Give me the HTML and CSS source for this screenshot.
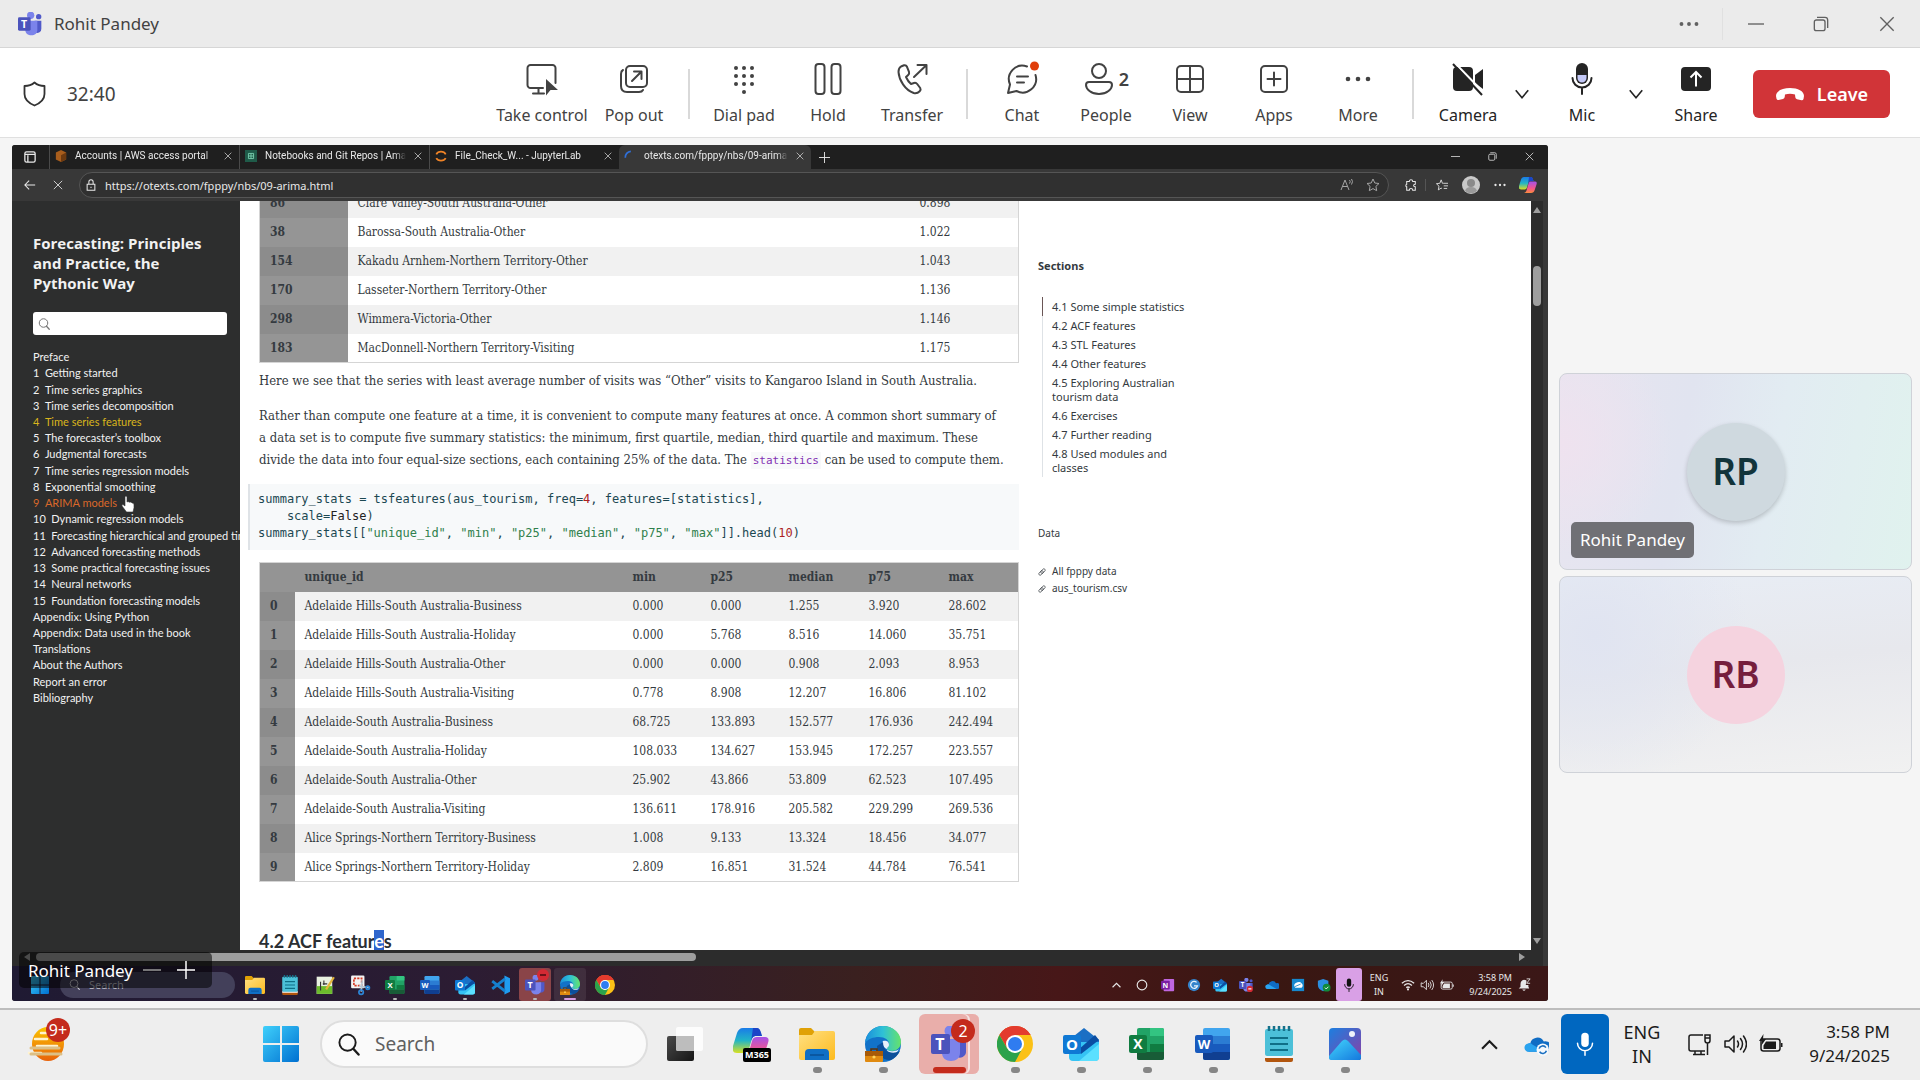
FILE: index.html
```html
<!DOCTYPE html>
<html lang="en">
<head>
<meta charset="utf-8">
<title>Rohit Pandey</title>
<link rel="stylesheet" href="styles.css">
</head>
<body>
<svg class="sprite" aria-hidden="true">
  <defs>
    <linearGradient id="g-win" x1="0" y1="0" x2="1" y2="1"><stop offset="0" stop-color="#3fd0fb"/><stop offset="1" stop-color="#0070d1"/></linearGradient>
    <linearGradient id="g-folder" x1="0" y1="0" x2="1" y2="1"><stop offset="0" stop-color="#ffe083"/><stop offset="1" stop-color="#fdbb1e"/></linearGradient>
    <linearGradient id="g-edge" x1="0" y1="0" x2="1" y2="0"><stop offset="0" stop-color="#1a8fdc"/><stop offset=".5" stop-color="#2fc1d6"/><stop offset="1" stop-color="#66e36a"/></linearGradient>
    <linearGradient id="g-sun" x1="0" y1="0" x2="0" y2="1"><stop offset="0" stop-color="#fbc400"/><stop offset="1" stop-color="#e8620a"/></linearGradient>
    <linearGradient id="g-cop1" x1="0" y1="0" x2="0" y2="1"><stop offset="0" stop-color="#1a7be8"/><stop offset=".5" stop-color="#22b5c6"/><stop offset="1" stop-color="#d9e021"/></linearGradient>
    <linearGradient id="g-cop2" x1="0" y1="0" x2="0" y2="1"><stop offset="0" stop-color="#a552e8"/><stop offset=".6" stop-color="#f4568a"/><stop offset="1" stop-color="#fb8b3c"/></linearGradient>
    <linearGradient id="g-photo" x1="0" y1="0" x2="1" y2="1"><stop offset="0" stop-color="#1c7fe0"/><stop offset="1" stop-color="#8a3fa5"/></linearGradient>
    <linearGradient id="g-hill" x1="0" y1="0" x2="1" y2="1"><stop offset="0" stop-color="#43d6fd"/><stop offset="1" stop-color="#1478dd"/></linearGradient>
    <linearGradient id="g-dark" x1="0" y1="0" x2="1" y2="1"><stop offset="0" stop-color="#4a4a4a"/><stop offset="1" stop-color="#151515"/></linearGradient>
  </defs>
  <symbol id="i-win" viewBox="0 0 36 36"><path fill="url(#g-win)" d="M2 0h15v17H0V2a2 2 0 0 1 2-2zM19 0h15a2 2 0 0 1 2 2v15H19zM0 19h17v17H2a2 2 0 0 1-2-2zM19 19h17v15a2 2 0 0 1-2 2H19z"/></symbol>
  <symbol id="i-folder" viewBox="0 0 36 36"><path fill="#e0a106" d="M0 4a2 2 0 0 1 2-2h10l4 4-3 6H0z"/><path fill="url(#g-folder)" d="M0 9h13l3-4h18a2 2 0 0 1 2 2v25a2 2 0 0 1-2 2H2a2 2 0 0 1-2-2z"/><path fill="#0f6fc5" d="M6 34V27a4 4 0 0 1 4-4h16a4 4 0 0 1 4 4v7z"/><path stroke="#0a4f94" stroke-width="1.5" d="M11 29h14"/></symbol>
  <symbol id="i-edge" viewBox="0 0 36 36"><circle cx="18" cy="18" r="18" fill="#1272c8"/><path fill="url(#g-edge)" d="M0 17C1 7 8 0 18 0s18 7 18 16c0 6-5 9-9 9-3 0-5-1-5-2 0-2 2-2 2-5 0-4-4-7-10-7C8 11 3 13 0 17z"/><path fill="#fff" d="M22 23c-3-1-6-5-4-8 5-1 6 2 6 4 0 2-2 2-2 4 0 1 3 3 7 2 2 0 4-1 5-2-2 4-5 6-8 5-2 0-4-2-4-5z" opacity=".9"/><path fill="#0c4f9a" d="M12 20c0 8 6 15 14 14 4-2 7-5 9-9-8 4-17 1-17-9z"/><path fill="#e08a10" d="M0 25h18v10a1 1 0 0 1-1 1H1a1 1 0 0 1-1-1z"/><path fill="#a85a07" d="M0 25h18v5H0z"/><path d="M6 25v-2h6v2" fill="none" stroke="#5b3008" stroke-width="1.5"/><circle cx="9" cy="31" r="1.6" fill="#ffd35a"/></symbol>
  <symbol id="i-teams" viewBox="0 0 36 36"><circle cx="19" cy="5" r="5.5" fill="#7b83eb"/><circle cx="31" cy="7" r="4" fill="#5059c9"/><path fill="#5059c9" d="M25 13h10v12a6 6 0 0 1-10 5z"/><path fill="#7b83eb" d="M11 13h18v14c0 5-4 8-9 8s-9-3-9-8z"/><rect y="8" width="19" height="20" rx="2" fill="#4b53bc"/><text x="9" y="24" class="glyph" font-size="16">T</text></symbol>
  <symbol id="i-chrome" viewBox="0 0 36 36"><circle cx="18" cy="18" r="18" fill="#fbc116"/><path fill="#e33b2e" d="M18 18 2.4 9A18 18 0 0 1 33.6 9H18z"/><path fill="#e33b2e" d="M2.4 9 10 22l8-13h15.600A18 18 0 0 0 2.400 9z"/><path fill="#2ba24c" d="M2.4 9 10.200 22.500 18 27l-0.500 0 7.500-4-7 13A18 18 0 0 1 2.400 9z"/><circle cx="18" cy="18" r="9" fill="#fff"/><circle cx="18" cy="18" r="7" fill="#2f7cf0"/></symbol>
  <symbol id="i-outlook" viewBox="0 0 36 36"><path fill="#1b6fc4" d="M6 14 21 2l15 12v8H6z"/><path fill="#35c3f4" d="M6 16h30v15a4 4 0 0 1-4 4H10a4 4 0 0 1-4-4z"/><path fill="#0a4ea3" d="M15 24 32 9l4 5-18 14z"/><path fill="#5be0ff" d="M16 35 36 18v13a4 4 0 0 1-4 4z"/><rect y="9" width="18" height="19" rx="2" fill="#0f78d4"/><text x="9" y="24" class="glyph" font-size="15">O</text></symbol>
  <symbol id="i-excel" viewBox="0 0 36 36"><rect x="8" y="2" width="27" height="32" rx="2" fill="#21a366"/><path fill="#33c481" d="M21 2h12a2 2 0 0 1 2 2v6H21z"/><path fill="#107c41" d="M21 18h14v8H21z"/><path fill="#185c37" d="M8 26h27v6a2 2 0 0 1-2 2H10a2 2 0 0 1-2-2z"/><rect y="9" width="18" height="18" rx="2" fill="#107c41"/><text x="9" y="23" class="glyph" font-size="14">X</text></symbol>
  <symbol id="i-word" viewBox="0 0 36 36"><rect x="8" y="2" width="27" height="32" rx="2" fill="#41a5ee"/><path fill="#2b7cd3" d="M8 10h27v8H8z"/><path fill="#185abd" d="M8 18h27v8H8z"/><path fill="#103f91" d="M8 26h27v6a2 2 0 0 1-2 2H10a2 2 0 0 1-2-2z"/><rect y="9" width="18" height="18" rx="2" fill="#185abd"/><text x="9" y="23" class="glyph" font-size="13">W</text></symbol>
  <symbol id="i-notepad" viewBox="0 0 36 36"><rect x="4" y="30" width="28" height="6" rx="2" fill="#b2560e"/><path fill="#f5f5f5" d="M4 29h28v3H4z"/><rect x="4" y="3" width="28" height="27" rx="2" fill="#4cc0d8"/><path d="M8 0v5M13 0v5M18 0v5M23 0v5M28 0v5" stroke="#16718a" stroke-width="2.500"/><path d="M9 12h18M9 18h18M9 24h18" stroke="#0f6f87" stroke-width="2"/></symbol>
  <symbol id="i-photos" viewBox="0 0 36 36"><rect x="2" y="2" width="32" height="32" rx="4" fill="url(#g-photo)"/><path fill="#104fa8" d="m16 34 10-12 8 8v2a2 2 0 0 1-2 2z"/><path fill="url(#g-hill)" d="M2 30 15 15q3-3 6 0l13 14v3a2 2 0 0 1-2 2H4a2 2 0 0 1-2-2z"/><circle cx="25" cy="8" r="3" fill="#eef2fa"/></symbol>
  <symbol id="i-taskview" viewBox="0 0 36 36"><rect x="0" y="10" width="27" height="25" rx="2" fill="url(#g-dark)"/><rect x="9" y="1" width="27" height="24" rx="2" fill="#fff" opacity=".8"/><path fill="#bdbdbd" d="M9 10h18v15H11a2 2 0 0 1-2-2z"/></symbol>
  <symbol id="i-copilot" viewBox="0 0 36 36"><path fill="url(#g-cop1)" d="M10 2h14c3 0 3 4 5 8h-6c-3 0-4 2-5 6l-2 7c-1 3-3 4-6 4H4c-4 0-5-3-4-7l4-13c1-3 3-5 6-5z"/><path fill="#1c45c8" d="M20 2h4c3 0 4 4 5 8h-6c-3 0-4 2-5 6z"/><path fill="url(#g-cop2)" d="M32 11h-8c-3 0-4 1-5 4l-4 14c-1 3-3 5-5 5h14c4 0 6-2 7-5l4-12c1-3 1-6-3-6z"/></symbol>
  <symbol id="i-search" viewBox="0 0 24 24"><circle cx="11" cy="10" r="8.500" fill="none" stroke="currentColor" stroke-width="2"/><path d="m17 16.500 5.500 6" stroke="currentColor" stroke-width="2.500" stroke-linecap="round"/></symbol>
  <symbol id="i-mic" viewBox="0 0 24 32"><rect x="7" y="1" width="10" height="19" rx="5" fill="currentColor"/><path d="M2 15a10 10 0 0 0 20 0M12 25v6" fill="none" stroke="currentColor" stroke-width="2" stroke-linecap="round"/></symbol>
  <symbol id="i-volume" viewBox="0 0 24 24"><path d="M2 9v6h4l5 5V4L6 9zM14.500 9q2 3 0 6M17.500 6.500q4 5.500 0 11M20.500 4q6 8 0 16" fill="none" stroke="currentColor" stroke-width="1.500" stroke-linejoin="round" stroke-linecap="round"/></symbol>
  <symbol id="i-battery" viewBox="0 0 24 24"><rect x="2" y="7" width="19" height="12" rx="2.500" fill="none" stroke="currentColor" stroke-width="1.500"/><path fill="currentColor" d="M7 9.500h10v7.500H4.500v-3.500zM22 11h1.500v4H22zM4.500 2 0 9h3l-1 5 5-7H4z"/></symbol>
  <symbol id="i-close" viewBox="0 0 12 12"><path d="m1 1 10 10M11 1 1 11" stroke="currentColor" fill="none"/></symbol>
  <symbol id="i-restore" viewBox="0 0 12 12"><path d="M1 4.500A1.500 1.500 0 0 1 2.500 3h5A1.500 1.500 0 0 1 9 4.500v5A1.500 1.500 0 0 1 7.500 11h-5A1.500 1.500 0 0 1 1 9.500zM3 1h6a2 2 0 0 1 2 2v6" stroke="currentColor" fill="none"/></symbol>
  <symbol id="i-dash" viewBox="0 0 12 12"><path d="M0 6h12" stroke="currentColor"/></symbol>
  <symbol id="i-plus" viewBox="0 0 12 12"><path d="M0 6h12M6 0v12" stroke="currentColor"/></symbol>
  <symbol id="i-dots" viewBox="0 0 24 24"><circle cx="3" cy="12" r="2.300" fill="currentColor"/><circle cx="12" cy="12" r="2.300" fill="currentColor"/><circle cx="21" cy="12" r="2.300" fill="currentColor"/></symbol>
  <symbol id="i-down" viewBox="0 0 16 16"><path d="m3 5 5 6 5-6" fill="none" stroke="currentColor" stroke-width="1.300"/></symbol>
  <symbol id="i-up" viewBox="0 0 16 16"><path d="m1 12 7-7 7 7" fill="none" stroke="currentColor" stroke-width="2"/></symbol>
  <symbol id="i-cloud" viewBox="0 0 24 24"><path fill="#0f6cc4" d="M6 11a7 7 0 0 1 13-2 5 5 0 0 1 3 10H5a4 4 0 0 1 1-8z"/><path fill="#2aa3ef" d="m8 12 12 7H5a4 4 0 0 1-1-8q2-1 4 1z"/></symbol>
  <symbol id="i-link" viewBox="0 0 12 12"><g fill="none" stroke="currentColor" transform="rotate(-45 6 6)"><rect x="0" y="4" width="8" height="4" rx="2"/><rect x="4" y="4" width="8" height="4" rx="2"/></g></symbol>
</svg>

<header class="titlebar">
  <svg class="app-logo"><use href="#i-teams"/></svg>
  <h1 class="title">Rohit Pandey</h1>
  <div class="window-controls">
    <button aria-label="More"><svg class="more"><use href="#i-dots"/></svg></button>
    <button class="ruled" aria-label="Minimize"><svg><use href="#i-dash"/></svg></button>
    <button aria-label="Restore"><svg><use href="#i-restore"/></svg></button>
    <button aria-label="Close"><svg><use href="#i-close"/></svg></button>
  </div>
</header>

<div class="toolbar">
  <svg class="shield" viewBox="0 0 24 26"><path d="M12 1.500q4 3.500 10 3.500v8c0 5-4 9-10 11.500C6 22 2 18 2 13V5q6 0 10-3.500z" fill="none" stroke="currentColor" stroke-width="1.800" stroke-linejoin="round"/></svg>
  <time class="timer">32:40</time>
  <div class="actions">
    <button class="action wide"><svg viewBox="0 0 32 32"><path class="ln" d="M17 25H4.500a3 3 0 0 1-3-3V5a3 3 0 0 1 3-3h22a3 3 0 0 1 3 3v15M12.500 25v5M7 30.500h11"/><path class="fl" d="M20 16v16.500l4.500-5.500H32z"/></svg>Take control</button>
    <button class="action"><svg viewBox="0 0 32 32"><rect class="ln" x="8" y="3" width="21" height="21" rx="4"/><path class="ln" d="M5 7q-2 1-2 4v12q0 6 6 6h12q3 0 4-2M14 18l9-9M16 8.500h7.500V16"/></svg>Pop out</button>
    <span class="rule"></span>
    <button class="action"><svg viewBox="0 0 32 32"><g class="fl"><circle cx="8" cy="5" r="2"/><circle cx="16" cy="5" r="2"/><circle cx="24" cy="5" r="2"/><circle cx="8" cy="13" r="2"/><circle cx="16" cy="13" r="2"/><circle cx="24" cy="13" r="2"/><circle cx="8" cy="21" r="2"/><circle cx="16" cy="21" r="2"/><circle cx="24" cy="21" r="2"/><circle cx="16" cy="29" r="2"/></g></svg>Dial pad</button>
    <button class="action"><svg viewBox="0 0 32 32"><rect class="ln" x="3.500" y="1" width="9" height="30" rx="3"/><rect class="ln" x="19.500" y="1" width="9" height="30" rx="3"/></svg>Hold</button>
    <button class="action"><svg viewBox="0 0 32 32"><path class="ln" d="m5 3.500 3-1.200q2-.6 3 1.500l2 5q.6 2-.8 3.200L10 14q2 4.500 5 7l3-1q2-.6 3.200 1l3 4q1 1.800-.5 3.300-2.500 2.500-6 1.700C9 27 3 17 2.500 9q0-4 2.500-5.500zM18 14 30 2.500M21.500 2H30.500v9"/></svg>Transfer</button>
    <span class="rule"></span>
    <button class="action"><svg viewBox="0 0 32 32"><path class="ln" d="M21 3.500A13.500 13.500 0 0 0 4 21.500L2 30l8.500-2A13.500 13.500 0 0 0 29.500 12M11 13.500h11M11 19.500h7"/><circle cx="28.500" cy="3" r="4.500" fill="#e03e0a"/></svg>Chat</button>
    <button class="action"><span class="with-count"><svg viewBox="0 0 32 32"><circle class="ln" cx="16" cy="8" r="7"/><path class="ln" d="M6 19h20q3 0 3 3c0 4-5 9-13 9S3 26 3 22q0-3 3-3z"/></svg><b>2</b></span>People</button>
    <button class="action"><svg viewBox="0 0 32 32"><rect class="ln" x="3" y="3" width="26" height="26" rx="4"/><path class="ln" d="M16 3v26M3 16h26"/></svg>View</button>
    <button class="action"><svg viewBox="0 0 32 32"><rect class="ln" x="3" y="3" width="26" height="26" rx="4"/><path class="ln" d="M16 9.500v13M9.500 16h13"/></svg>Apps</button>
    <button class="action"><svg viewBox="0 0 32 32"><g class="fl"><circle cx="6" cy="16" r="2.300"/><circle cx="16" cy="16" r="2.300"/><circle cx="26" cy="16" r="2.300"/></g></svg>More</button>
    <span class="rule"></span>
    <button class="action strong"><svg viewBox="0 0 32 32"><rect class="fl" x="1" y="4" width="20" height="24" rx="4"/><path class="fl" d="m23 12 8-6v20l-8-6z"/><path d="M3 0 33 31" stroke="#fff" stroke-width="2"/><path d="M1 1 30 32" stroke="currentColor" stroke-width="2"/></svg>Camera</button>
    <button class="chevron" aria-label="Camera options"><svg><use href="#i-down"/></svg></button>
    <button class="action strong"><svg viewBox="0 0 32 32"><rect class="fl" x="10" y="0" width="12" height="21" rx="6"/><path fill="#c3c8f7" d="M11.500 12h9v3a4.500 4.500 0 0 1-9 0z"/><path class="ln" d="M6.500 15a9.500 9.500 0 0 0 19 0M16 25v6"/></svg>Mic</button>
    <button class="chevron" aria-label="Mic options"><svg><use href="#i-down"/></svg></button>
    <button class="action strong"><svg viewBox="0 0 32 32"><rect class="fl" x="1" y="4" width="30" height="24" rx="4"/><path d="M16 23.500V9m-5.500 5.500L16 9l5.500 5.500" fill="none" stroke="#fff" stroke-width="2"/></svg>Share</button>
    <button class="leave"><svg viewBox="0 0 30 14"><path fill="#fff" d="M1 9C1 4 7 1 15 1s14 3 14 8l-.5 3q-.5 1.500-2 1.200l-4.500-1q-1.500-.4-1.700-2L20 7.500q-5-1.700-10 0L9.700 10q-.2 1.600-1.700 2l-4.500 1q-1.500.3-2-1.200z"/></svg>Leave</button>
  </div>
</div>

<main class="stage">
  <section class="remote">
    <div class="tabs">
      <svg class="ws-icon" viewBox="0 0 14 14"><path d="M1 3a2 2 0 0 1 2-2h8a2 2 0 0 1 2 2v8a2 2 0 0 1-2 2H3a2 2 0 0 1-2-2zM4.500 5v8M1 4h12" fill="none" stroke="#e8e8e8" stroke-width="1.500"/></svg>
      <div class="tab"><svg viewBox="0 0 14 14"><path fill="#a85d1c" d="m7 0 6 3v8l-6 3-6-3V3z"/><path fill="#6d3a10" d="m7 6 6-3v8l-6 3z"/></svg><span>Accounts | AWS access portal</span><button aria-label="Close tab"><svg><use href="#i-close"/></svg></button></div>
      <div class="tab"><svg viewBox="0 0 14 14"><rect width="14" height="14" fill="#1f5b49"/><path d="M4 4h6v6H4zM7 4v6M4 7h6" fill="none" stroke="#7fd6b5"/></svg><span>Notebooks and Git Repos | Amazon</span><button aria-label="Close tab"><svg><use href="#i-close"/></svg></button></div>
      <div class="tab"><svg viewBox="0 0 14 14"><path d="M1.500 5A6 5 0 0 1 12.500 5M1.500 9.500a6 5 0 0 0 11 0" fill="none" stroke="#f08326" stroke-width="2"/></svg><span>File_Check_W... - JupyterLab</span><button aria-label="Close tab"><svg><use href="#i-close"/></svg></button></div>
      <div class="tab current"><svg viewBox="0 0 14 14"><path d="M1.500 9A7 7 0 0 1 8 1.500" fill="none" stroke="#2f6fd8" stroke-width="2"/></svg><span>otexts.com/fpppy/nbs/09-arima.html</span><button aria-label="Close tab"><svg><use href="#i-close"/></svg></button></div>
      <button class="new-tab" aria-label="New tab"><svg><use href="#i-plus"/></svg></button>
      <div class="mini-controls">
        <button aria-label="Minimize"><svg><use href="#i-dash"/></svg></button>
        <button aria-label="Restore"><svg><use href="#i-restore"/></svg></button>
        <button aria-label="Close"><svg><use href="#i-close"/></svg></button>
      </div>
    </div>
    <div class="address">
      <button aria-label="Back"><svg viewBox="0 0 14 14"><path d="M13 7H1m5-5L1 7l5 5" fill="none" stroke="currentColor" stroke-width="1.200"/></svg></button>
      <button aria-label="Stop"><svg><use href="#i-close"/></svg></button>
      <label class="url">
        <svg viewBox="0 0 14 14"><path d="M2.500 6h9v7h-9zM4.500 6V3.500a2.500 2.500 0 0 1 5 0V6M7 9v1.500" fill="none" stroke="currentColor" stroke-width="1.200"/></svg>
        <input aria-label="Address" value="https://otexts.com/fpppy/nbs/09-arima.html">
        <svg class="dim" viewBox="0 0 14 14"><path d="m1 12 4-10 4 10M2.500 8.500h5M9.500 2q1.500 1.500 0 3.500M11.500 1q2 2.500 0 5.500" fill="none" stroke="currentColor"/></svg>
        <svg class="dim" viewBox="0 0 14 14"><path d="m7 1 1.800 4 4.200.5-3.100 2.900.8 4.300L7 10.600l-3.700 2.100.8-4.300L1 5.500 5.200 5z" fill="none" stroke="currentColor"/></svg>
      </label>
      <button aria-label="Extensions"><svg viewBox="0 0 14 14"><path d="M2 3h3q0-2 2-2t2 2h3v3q-2 0-2 1.500T12 9v4H9q0-2-2-2t-2 2H2V9q-1 0-1-1.500T2 6z" fill="none" stroke="currentColor" stroke-width="1.200"/></svg></button>
      <span class="mini-rule"></span>
      <button aria-label="Favorites"><svg viewBox="0 0 14 14"><path d="M9 5 7.500 5 6 1 4.500 5 .5 5.500l3 2.900-.8 4.300L6 10.600l1 .6M9 5h5M9 8h5M9 11h4" fill="none" stroke="currentColor"/></svg></button>
      <svg class="profile" viewBox="0 0 18 18"><circle cx="9" cy="9" r="9" fill="#c9c9c9"/><circle cx="9" cy="7" r="4" fill="#8a8a8a"/><path d="M3 15q1-4 6-4t6 4a9 9 0 0 1-12 0z" fill="#9a9a9a"/></svg>
      <button aria-label="Menu"><svg><use href="#i-dots"/></svg></button>
      <button class="copilot" aria-label="Copilot"><svg><use href="#i-copilot"/></svg></button>
    </div>

    <div class="viewport">
      <nav class="book">
        <h2>Forecasting: Principles<br>and Practice, the<br>Pythonic Way</h2>
        <label class="book-search"><svg><use href="#i-search"/></svg><input aria-label="Search the book"></label>
        <div class="chapters">
          <a href="#">Preface</a><a href="#">1&ensp;Getting started</a><a href="#">2&ensp;Time series graphics</a><a href="#">3&ensp;Time series decomposition</a><a href="#" class="on">4&ensp;Time series features</a><a href="#">5&ensp;The forecaster’s toolbox</a><a href="#">6&ensp;Judgmental forecasts</a><a href="#">7&ensp;Time series regression models</a><a href="#">8&ensp;Exponential smoothing</a><a href="#" class="hover">9&ensp;ARIMA models</a><a href="#">10&ensp;Dynamic regression models</a><a href="#">11&ensp;Forecasting hierarchical and grouped time series</a><a href="#">12&ensp;Advanced forecasting methods</a><a href="#">13&ensp;Some practical forecasting issues</a><a href="#">14&ensp;Neural networks</a><a href="#">15&ensp;Foundation forecasting models</a><a href="#">Appendix: Using Python</a><a href="#">Appendix: Data used in the book</a><a href="#">Translations</a><a href="#">About the Authors</a><a href="#">Report an error</a><a href="#">Bibliography</a>
        </div>
        <svg class="hand" viewBox="0 0 14 18"><path fill="#fff" stroke="#333" stroke-width=".6" d="M4 1.500q1.300-1 2 .5v5l1-.5 1.500.7 1.500-.2 1 1 1.500.3.500 1.500v3L12 17H5.500L1 11q-.5-1.500 1-1.500l2 1.500z"/></svg>
      </nav>
      <article class="chapter">
        <table class="means">
          <tr><th>86</th><td>Clare Valley-South Australia-Other</td><td>0.898</td></tr>
          <tr><th>38</th><td>Barossa-South Australia-Other</td><td>1.022</td></tr>
          <tr><th>154</th><td>Kakadu Arnhem-Northern Territory-Other</td><td>1.043</td></tr>
          <tr><th>170</th><td>Lasseter-Northern Territory-Other</td><td>1.136</td></tr>
          <tr><th>298</th><td>Wimmera-Victoria-Other</td><td>1.146</td></tr>
          <tr><th>183</th><td>MacDonnell-Northern Territory-Visiting</td><td>1.175</td></tr>
        </table>
        <p>Here we see that the series with least average number of visits was “Other” visits to Kangaroo Island in South Australia.</p>
        <p>Rather than compute one feature at a time, it is convenient to compute many features at once. A common short summary of<br>a data set is to compute five summary statistics: the minimum, first quartile, median, third quartile and maximum. These<br>divide the data into four equal-size sections, each containing 25% of the data. The <code>statistics</code> can be used to compute them.</p>
<pre>summary_stats = tsfeatures(aus_tourism, freq=<i>4</i>, features=[statistics],
    scale=<em>False</em>)
summary_stats[[<b>"unique_id"</b>, <b>"min"</b>, <b>"p25"</b>, <b>"median"</b>, <b>"p75"</b>, <b>"max"</b>]].head(<i>10</i>)</pre>
        <table class="stats">
          <thead><tr><th></th><th>unique_id</th><th>min</th><th>p25</th><th>median</th><th>p75</th><th>max</th></tr></thead>
          <tbody>
          <tr><th>0</th><td>Adelaide Hills-South Australia-Business</td><td>0.000</td><td>0.000</td><td>1.255</td><td>3.920</td><td>28.602</td></tr>
          <tr><th>1</th><td>Adelaide Hills-South Australia-Holiday</td><td>0.000</td><td>5.768</td><td>8.516</td><td>14.060</td><td>35.751</td></tr>
          <tr><th>2</th><td>Adelaide Hills-South Australia-Other</td><td>0.000</td><td>0.000</td><td>0.908</td><td>2.093</td><td>8.953</td></tr>
          <tr><th>3</th><td>Adelaide Hills-South Australia-Visiting</td><td>0.778</td><td>8.908</td><td>12.207</td><td>16.806</td><td>81.102</td></tr>
          <tr><th>4</th><td>Adelaide-South Australia-Business</td><td>68.725</td><td>133.893</td><td>152.577</td><td>176.936</td><td>242.494</td></tr>
          <tr><th>5</th><td>Adelaide-South Australia-Holiday</td><td>108.033</td><td>134.627</td><td>153.945</td><td>172.257</td><td>223.557</td></tr>
          <tr><th>6</th><td>Adelaide-South Australia-Other</td><td>25.902</td><td>43.866</td><td>53.809</td><td>62.523</td><td>107.495</td></tr>
          <tr><th>7</th><td>Adelaide-South Australia-Visiting</td><td>136.611</td><td>178.916</td><td>205.582</td><td>229.299</td><td>269.536</td></tr>
          <tr><th>8</th><td>Alice Springs-Northern Territory-Business</td><td>1.008</td><td>9.133</td><td>13.324</td><td>18.456</td><td>34.077</td></tr>
          <tr><th>9</th><td>Alice Springs-Northern Territory-Holiday</td><td>2.809</td><td>16.851</td><td>31.524</td><td>44.784</td><td>76.541</td></tr>
          </tbody>
        </table>
        <h3>4.2 ACF featur<mark>e</mark>s</h3>
      </article>
      <aside class="toc">
        <h4>Sections</h4>
        <div class="toc-list"><a href="#" class="here">4.1 Some simple statistics</a><a href="#">4.2 ACF features</a><a href="#">4.3 STL Features</a><a href="#">4.4 Other features</a><a href="#">4.5 Exploring Australian<br>tourism data</a><a href="#">4.6 Exercises</a><a href="#">4.7 Further reading</a><a href="#">4.8 Used modules and<br>classes</a></div>
        <h5>Data</h5>
        <a class="file" href="#"><svg><use href="#i-link"/></svg>All fpppy data</a>
        <a class="file" href="#"><svg><use href="#i-link"/></svg>aus_tourism.csv</a>
      </aside>
      <div class="vscroll"><i class="tri up"></i><i class="thumb"></i><i class="tri down"></i></div>
    </div>
    <div class="hscroll"><i class="tri left"></i><i class="thumb"></i><i class="tri right"></i></div>

    <div class="remote-bar">
      <svg class="start"><use href="#i-win"/></svg>
      <label class="remote-search"><svg><use href="#i-search"/></svg><input aria-label="Remote search" placeholder="Search"></label>
      <div class="remote-apps">
        <span class="run"><svg><use href="#i-folder"/></svg></span>
        <span><svg><use href="#i-notepad"/></svg></span>
        <span><svg viewBox="0 0 36 36"><rect x="3" y="3" width="28" height="31" fill="#e9f1e0"/><path fill="#6cbb2c" d="M3 20h28v14H3z"/><path d="M10 12v16M16 10v8M14 16h8" stroke="#333" stroke-width="2"/><path d="m34 4-14 22" stroke="#e3b53a" stroke-width="4"/></svg></span>
        <span><svg viewBox="0 0 36 36"><rect x="2" y="1" width="24" height="23" rx="2" fill="#f3f3f3"/><rect x="7" y="6" width="14" height="13" fill="none" stroke="#d43a24" stroke-width="3" stroke-dasharray="4 2"/><path d="M20 30 22 10M16 20l18 3" stroke="#b9c6d0" stroke-width="3"/><circle cx="20" cy="31" r="4" fill="none" stroke="#2b86d8" stroke-width="3"/><circle cx="32" cy="23" r="3" fill="none" stroke="#2b86d8" stroke-width="3"/></svg></span>
        <span class="run"><svg><use href="#i-excel"/></svg></span>
        <span><svg><use href="#i-word"/></svg></span>
        <span class="run"><svg><use href="#i-outlook"/></svg></span>
        <span><svg viewBox="0 0 36 36"><path fill="#1f9cf0" d="M26 1 36 6v24l-10 5z"/><path d="M27 7 4 25M27 29 4 11" stroke="#1581cf" stroke-width="5"/></svg></span>
        <span class="run alert"><svg><use href="#i-teams"/></svg><svg class="busy" viewBox="0 0 12 12"><circle cx="6" cy="6" r="6" fill="#d42a34"/><path d="M3 6h6" stroke="#4a0d10" stroke-width="1.500"/></svg></span>
        <span class="run focus"><svg><use href="#i-edge"/></svg></span>
        <span><svg><use href="#i-chrome"/></svg></span>
      </div>
      <div class="remote-tray">
        <svg><use href="#i-up"/></svg>
        <svg viewBox="0 0 16 16"><circle cx="8" cy="8" r="5.500" fill="none" stroke="currentColor" stroke-width="1.300"/></svg>
        <svg viewBox="0 0 16 16"><rect x="3" y="1" width="12" height="14" rx="1" fill="#c067e0"/><rect y="3" width="10" height="10" rx="1" fill="#7a1fa2"/><text x="5" y="11" class="glyph" font-size="8">N</text></svg>
        <svg viewBox="0 0 16 16"><circle cx="8" cy="8" r="7" fill="#3584cc"/><path d="M11 5a4 4 0 1 0 1 4H8" fill="none" stroke="#e8f2fb" stroke-width="1.500"/></svg>
        <svg><use href="#i-outlook"/></svg>
        <svg viewBox="0 0 36 36"><use href="#i-teams"/><circle cx="28" cy="28" r="8" fill="#d42a34"/><path d="M24 28h8" stroke="#fff" stroke-width="3"/></svg>
        <svg><use href="#i-cloud"/></svg>
        <svg viewBox="0 0 16 16"><rect x="1" y="1" width="14" height="14" fill="#1688cf"/><path fill="#fff" d="M5 11a3 3 0 0 1 0-5q5-3 7 0a3 3 0 0 1 0 5z"/><path d="m4 10 7-3" stroke="#1688cf"/></svg>
        <svg viewBox="0 0 16 16"><path fill="#2b8fe0" d="m7 1 6 2v5q0 5-6 7-6-2-6-7V3z"/><circle cx="11" cy="11" r="4.500" fill="#118a3a"/><path d="m9 11 1.500 1.500L13 10" fill="none" stroke="#fff"/></svg>
        <button class="remote-mic" aria-label="Microphone in use"><svg><use href="#i-mic"/></svg></button>
        <span class="lang">ENG<br>IN</span>
        <svg class="first" viewBox="0 0 16 16"><path d="M1 6q7-6 14 0M3.500 8.500q4.500-4 9 0M6 11q2-1.500 4 0" fill="none" stroke="currentColor" stroke-width="1.500"/><circle cx="8" cy="13" r="1.200" fill="currentColor"/></svg>
        <svg class="close-up"><use href="#i-volume"/></svg>
        <svg class="close-up"><use href="#i-battery"/></svg>
        <time>3:58 PM<br>9/24/2025</time>
        <svg viewBox="0 0 16 16"><path fill="currentColor" d="M2 12 4 10V7q0-4 4-5 2 0 3 1l-1 5h3v2l1 2zM6 13h4q-2 3-4 0z"/><path d="M11 1h4l-4 5h4" fill="none" stroke="currentColor"/></svg>
      </div>
    </div>

    <div class="presenter">
      <span>Rohit Pandey</span>
      <button class="dim" aria-label="Zoom out"><svg><use href="#i-dash"/></svg></button>
      <button aria-label="Zoom in"><svg><use href="#i-plus"/></svg></button>
    </div>
  </section>

  <aside class="gallery">
    <div class="tile rp"><span class="avatar">RP</span><span class="name">Rohit Pandey</span></div>
    <div class="tile rb"><span class="avatar">RB</span></div>
  </aside>
</main>

<footer class="taskbar">
  <button class="weather" aria-label="Widgets"><svg viewBox="0 0 36 40"><ellipse cx="19" cy="20" rx="16" ry="17" fill="url(#g-sun)"/><path d="M12 9h10M6 15h12M8 22h20M0 29h12" stroke="#fff3cf" stroke-width="2.500" stroke-linecap="round"/><path d="M2 24h28M2 30h30" stroke="#dcbf86" stroke-width="3" stroke-linecap="round"/></svg><span class="badge">9+</span></button>
  <button class="app" aria-label="Start"><svg><use href="#i-win"/></svg></button>
  <label class="search"><svg><use href="#i-search"/></svg><input aria-label="Search" placeholder="Search"></label>
  <button class="app" aria-label="Task view"><svg><use href="#i-taskview"/></svg></button>
  <button class="app" aria-label="Copilot"><svg><use href="#i-copilot"/></svg><span class="m365">M365</span></button>
  <button class="app run" aria-label="File Explorer"><svg><use href="#i-folder"/></svg></button>
  <button class="app run" aria-label="Edge"><svg><use href="#i-edge"/></svg></button>
  <button class="app run alert" aria-label="Teams"><svg><use href="#i-teams"/></svg><span class="badge">2</span></button>
  <button class="app run" aria-label="Chrome"><svg><use href="#i-chrome"/></svg></button>
  <button class="app run" aria-label="Outlook"><svg><use href="#i-outlook"/></svg></button>
  <button class="app run" aria-label="Excel"><svg><use href="#i-excel"/></svg></button>
  <button class="app run" aria-label="Word"><svg><use href="#i-word"/></svg></button>
  <button class="app run" aria-label="Notepad"><svg><use href="#i-notepad"/></svg></button>
  <button class="app run" aria-label="Photos"><svg><use href="#i-photos"/></svg></button>
  <div class="tray">
    <button class="tray-up" aria-label="Hidden icons"><svg><use href="#i-up"/></svg></button>
    <svg class="onedrive" viewBox="0 0 24 24"><use href="#i-cloud"/><circle cx="18" cy="17" r="6" fill="#f4f8fc"/><path d="M14.500 16a3.600 3.600 0 0 1 6.500-1M21.500 18a3.600 3.600 0 0 1-6.500 1" fill="none" stroke="#1a6fc0" stroke-width="1.500"/></svg>
    <button class="mic" aria-label="Microphone in use"><svg><use href="#i-mic"/></svg></button>
    <span class="lang">ENG<br>IN</span>
    <span class="status">
      <svg viewBox="0 0 24 24"><path d="M16 3H4a2 2 0 0 0-2 2v12a2 2 0 0 0 2 2h14M8 19v3M14 19v3M6 22.500h12M18 3h5v5.500a2.500 2.500 0 0 1-5 0zM18 6h5M20.500 11v12" fill="none" stroke="currentColor" stroke-width="1.500"/></svg>
      <svg><use href="#i-volume"/></svg>
      <svg><use href="#i-battery"/></svg>
    </span>
    <time>3:58 PM<br>9/24/2025</time>
  </div>
</footer>
</body>
</html>
```
FILE: styles.css
```css
* { box-sizing: border-box; }
body {
  margin: 0;
  height: 100vh;
  display: flex;
  flex-direction: column;
  overflow: hidden;
  background: #f5f5f5;
  color: #424242;
  font-family: "Noto Sans", "Open Sans", sans-serif;
}
h1, h2, h3, h4, h5, p, pre { margin: 0; }
a { color: inherit; text-decoration: none; }
button {
  padding: 0;
  border: 0;
  background: none;
  color: inherit;
  font: inherit;
  display: flex;
  align-items: center;
  justify-content: center;
}
input {
  min-width: 0;
  flex: 1;
  padding: 0;
  border: 0;
  outline: 0;
  background: none;
  color: inherit;
  font: inherit;
}
svg { display: block; flex: none; overflow: visible; }
.sprite { position: absolute; width: 0; height: 0; }
.glyph { fill: #fff; font-family: "Open Sans", sans-serif; font-weight: 700; text-anchor: middle; }

/* Window title */
.titlebar {
  flex: none;
  height: 48px;
  display: flex;
  align-items: center;
  padding-left: 18px;
  background: #ebebeb;
  border-bottom: 1px solid #d6d6d6;
}
.app-logo { width: 24px; height: 24px; }
.title { margin-left: 12px; font-size: 17px; font-weight: 400; }
.window-controls { margin-left: auto; display: flex; color: #616161; }
.window-controls button { width: 66px; height: 32px; }
.window-controls svg { width: 16px; height: 16px; }
.window-controls .more { width: 20px; height: 20px; }
.window-controls .ruled { border-left: 1px solid #e0e0e0; }

/* Call toolbar */
.toolbar {
  flex: none;
  height: 90px;
  display: flex;
  align-items: center;
  padding: 2px 30px 0 22px;
  background: #fff;
  border-bottom: 1px solid #e0e0e0;
}
.shield { width: 25px; height: 26px; color: #333; }
.timer { margin-left: 20px; font-size: 19px; }
.actions { margin-left: auto; display: flex; align-items: center; }
.action {
  width: 84px;
  padding-top: 2px;
  flex-direction: column;
  gap: 9px;
  font-size: 16px;
  line-height: 22px;
  white-space: nowrap;
}
.action.wide { width: 100px; }
.action.strong { color: #242424; }
.action svg { width: 32px; height: 32px; }
.ln { fill: none; stroke: currentColor; stroke-width: 2; stroke-linejoin: round; stroke-linecap: round; }
.fl { fill: currentColor; }
.with-count { display: flex; align-items: center; gap: 4px; font-size: 18px; }
.with-count b { font-weight: 600; }
.rule { width: 2px; height: 50px; margin: 0 12px; background: #d9d9d9; }
.chevron { width: 24px; height: 40px; margin-right: 6px; color: #242424; }
.chevron svg { width: 20px; height: 20px; }
.leave {
  width: 137px;
  height: 48px;
  margin-left: 15px;
  gap: 12px;
  border-radius: 6px;
  background: #d13438;
  color: #fff;
  font-size: 18px;
  font-weight: 600;
}
.leave svg { width: 30px; height: 14px; }

/* Stage */
.stage {
  flex: 1;
  min-height: 0;
  display: flex;
  gap: 11px;
  padding: 7px 8px 7px 12px;
}
.remote {
  position: relative;
  flex: 1;
  min-width: 0;
  display: flex;
  flex-direction: column;
  overflow: hidden;
  border-radius: 3px;
  background: #383838;
  color: #e8e8e8;
}
.gallery {
  flex: none;
  width: 353px;
  display: flex;
  flex-direction: column;
  justify-content: center;
  gap: 6px;
}
.tile {
  position: relative;
  height: 197px;
  display: flex;
  align-items: center;
  justify-content: center;
  border: 1px solid #cfd2d8;
  border-radius: 8px;
}
.rp { background: radial-gradient(circle at 0 35%, #efe2ef 0, transparent 30%), linear-gradient(100deg, #e8e5f0 0, #e1e4f0 35%, #e2ecf2 60%, #e0f2ee 100%); }
.rb { background: radial-gradient(circle at 10% 30%, #e0e4f1 0, transparent 45%), linear-gradient(175deg, #e8edf5 0, #e7e8ed 45%, #f1f1f1 100%); }
.avatar {
  width: 98px;
  height: 98px;
  display: flex;
  align-items: center;
  justify-content: center;
  padding-bottom: 3px;
  border-radius: 50%;
  font-size: 37px;
  font-weight: 600;
}
.rp .avatar { background: #cfd9df; color: #12343b; box-shadow: 0 2px 5px #0003; }
.rb .avatar { background: #f5d3df; color: #761e3d; }
.name {
  position: absolute;
  left: 11px;
  bottom: 11px;
  padding: 0 9px;
  border-radius: 5px;
  background: #707075;
  color: #fff;
  font-size: 17px;
  line-height: 36px;
}

/* Shared browser: tab strip */
.tabs {
  flex: none;
  height: 24px;
  display: flex;
  align-items: center;
  background: #1f1f1f;
  font: 10px Roboto, sans-serif;
}
.ws-icon { width: 12px; height: 12px; margin: 0 13px 0 12px; }
.tab {
  width: 190px;
  height: 24px;
  display: flex;
  align-items: center;
  gap: 8px;
  padding: 0 7px 3px 5px;
  border-left: 1px solid #4a4a4a;
}
.tab svg { width: 12px; height: 12px; }
.tab span { flex: 1; overflow: hidden; white-space: nowrap; mask-image: linear-gradient(90deg, #000 92%, transparent); }
.tab button svg { width: 8px; height: 8px; }
.tab.current { width: 192px; border: 0; border-radius: 6px 6px 0 0; background: #383838; }
.new-tab { width: 27px; }
.new-tab svg { width: 11px; height: 11px; }
.mini-controls { margin-left: auto; display: flex; }
.mini-controls button { width: 37px; padding-bottom: 2px; }
.mini-controls svg { width: 9px; height: 9px; }

/* Shared browser: address row */
.address { flex: none; height: 32px; display: flex; align-items: center; padding-right: 6px; }
.address button { width: 28px; }
.address button:first-child { margin-left: 4px; }
.address svg { width: 12px; height: 12px; }
.address button + button svg { width: 10px; height: 10px; }
.url {
  flex: 1;
  height: 26px;
  display: flex;
  align-items: center;
  gap: 8px;
  margin: 0 8px 0 7px;
  padding: 0 8px 0 5px;
  border: 1px solid #555;
  border-radius: 13px;
  background: #303030;
  font-size: 11px;
}
.url .dim { width: 14px; height: 14px; margin-left: 4px; color: #a5a5a5; }
.mini-rule { width: 1px; height: 12px; background: #555; margin: 0 2px 0 0; }
.address .profile { width: 18px; height: 18px; margin: 0 6px; }
.address .copilot svg { width: 18px; height: 18px; }

/* Shared web page */
.viewport { flex: 1; min-height: 0; display: flex; overflow: hidden; padding-right: 5px; background: linear-gradient(270deg, #383838 5px, #fff 5px); }
.book {
  position: relative;
  flex: none;
  width: 228px;
  padding: 32px 0 0 21px;
  overflow: hidden;
  background: #2d2e2e;
  color: #f2f2f2;
  font-family: Lato, sans-serif;
}
.book h2 { font: 700 15px/20px "Open Sans", sans-serif; white-space: nowrap; }
.book-search {
  width: 194px;
  height: 23px;
  display: flex;
  align-items: center;
  margin-top: 19px;
  padding: 0 5px;
  gap: 4px;
  border-radius: 3px;
  background: #fff;
  color: #777;
}
.book-search svg { width: 12px; height: 12px; }
.chapters { height: 357px; margin-top: 14px; display: grid; grid-auto-rows: 1fr; align-items: center; font-size: 11px; line-height: 14px; white-space: nowrap; }
.chapters .on { color: #d9b51c; }
.chapters .hover { color: #d9682a; }
.hand { position: absolute; left: 109px; top: 294px; width: 14px; height: 18px; }
.chapter {
  flex: none;
  width: 771px;
  margin-left: 8px;
  padding-left: 11px;
  overflow: hidden;
  color: #343a40;
  font-family: "DejaVu Serif Condensed", "DejaVu Serif", serif;
}
.chapter p { margin-top: 7px; font-size: 13px; line-height: 22px; white-space: nowrap; }
.chapter p + p { margin-top: 13px; }
.chapter code { padding: 2px; background: #f8f9fa; color: #8230b4; font: 11px "DejaVu Sans Mono", monospace; }
.chapter pre {
  margin: 13px 0 12px -11px;
  padding: 7px 0 8px 8px;
  border-left: 2px solid #dfe3e7;
  background: #f7f9fa;
  color: #1c4852;
  font: 12px/17px "DejaVu Sans Mono", monospace;
}
.chapter pre i { color: #ad1f1f; font-style: normal; }
.chapter pre b { color: #2f7f4c; font-weight: 400; }
.chapter pre em { color: #222; font-style: normal; }
table { width: 760px; border-collapse: collapse; table-layout: fixed; border: 1px solid #d5d5d5; font-size: 12px; }
tr { height: 29px; }
th, td { padding: 0 0 0 10px; text-align: left; white-space: nowrap; line-height: 16px; }
tr:nth-child(odd) td { background: #f1f1f1; }
th { background: #959595; }
tr:nth-child(odd) th { background: #8c8c8c; }
thead tr:nth-child(odd) th { background: #949494; }
.means { margin-top: -13px; }
.means th { width: 88px; }
.means td:last-child { width: 109px; }
.stats th { width: 35px; }
.stats thead th:nth-child(2) { width: auto; }
.stats thead th:nth-child(n+3) { width: 80px; }
.stats thead th:nth-child(3), .stats thead th:nth-child(4) { width: 78px; }
.chapter h3 { margin-top: 47px; font: 700 18px/24px Lato, sans-serif; color: #2b2f33; }
.chapter mark { background: #2f66cc; color: #fff; }
.toc { flex: 1; margin-left: 19px; padding-top: 57px; color: #343a40; font: 11px/14px "Noto Sans", sans-serif; }
.toc h4 { font-size: 11px; line-height: 16px; }
.toc-list { margin: 23px 0 0 4px; border-left: 1px solid #dee2e6; }
.toc-list a { display: block; padding: 3px 0 2px 9px; margin-left: -1px; border-left: 1px solid transparent; }
.toc-list .here { border-color: #6a5656; }
.toc h5 { margin: 48px 0 22px; font-size: 10px; line-height: 16px; font-weight: 400; }
.file { display: flex; align-items: center; gap: 6px; font-size: 10px; line-height: 17px; }
.file svg { width: 8px; height: 8px; }
.vscroll { width: 12px; display: flex; flex-direction: column; align-items: center; padding: 6px 0; background: #2c2c2c; }
.vscroll .thumb { width: 8px; height: 40px; margin: 53px 0 auto; border-radius: 4px; background: #9e9e9e; }
.tri { width: 0; height: 0; border: 4px solid transparent; }
.tri.up { border-bottom: 6px solid #9e9e9e; border-top: 0; }
.tri.down { border-top: 6px solid #9e9e9e; border-bottom: 0; }
.tri.left { border-right: 6px solid #9e9e9e; border-left: 0; }
.tri.right { border-left: 6px solid #9e9e9e; border-right: 0; }
.hscroll { flex: none; height: 16px; margin-right: 5px; padding: 2px 18px 5px 12px; display: flex; align-items: center; gap: 6px; background: #2c2c2c; }
.hscroll .thumb { width: 44%; height: 8px; border-radius: 4px; background: #9e9e9e; margin-right: auto; }

/* Shared desktop's own taskbar */
.remote-bar {
  flex: none;
  height: 35px;
  display: flex;
  align-items: center;
  padding: 2px 17px 0 19px;
  background: linear-gradient(90deg, #1f1a33 0, #2c1c33 30%, #3a201f 55%, #471718 68%, #391712 82%, #3b1717 100%);
  font-size: 10px;
}
.start { width: 18px; height: 18px; }
.remote-search {
  width: 175px;
  height: 26px;
  display: flex;
  align-items: center;
  gap: 9px;
  margin-left: 11px;
  padding-left: 9px;
  border-radius: 13px;
  background: #43405a;
  color: #d0d0d8;
  font-size: 11px;
}
.remote-search svg { width: 11px; height: 11px; }
.remote-search input::placeholder { color: #b8b8c4; opacity: 1; }
.remote-apps { display: flex; gap: 3px; margin-left: 4px; }
.remote-apps span { position: relative; width: 32px; height: 33px; display: flex; align-items: center; justify-content: center; }
.remote-apps svg { width: 20px; height: 20px; }
.run::after { content: ""; position: absolute; bottom: 1px; left: calc(50% - 2px); width: 4px; height: 2px; border-radius: 1px; background: #b9b9b9; }
.remote-apps .alert { background: #8a4448; border-radius: 3px; }
.remote-apps .focus { background: #ffffff14; border-radius: 3px; }
.remote-apps .focus::after { left: 10px; width: 12px; background: #d59be0; }
.remote-apps .busy { position: absolute; top: 1px; right: 2px; width: 12px; height: 12px; }
.remote-tray { margin-left: auto; display: flex; align-items: center; }
.remote-tray > svg { width: 14px; height: 14px; margin-right: 12px; }
.remote-tray > svg:first-child { width: 9px; margin-right: 14px; }
.remote-mic { width: 26px; height: 33px; margin-left: -7px; border-radius: 3px; background: #d9a0e6; color: #111; }
.remote-mic svg { width: 12px; height: 14px; }
.remote-tray .lang { width: 34px; text-align: center; line-height: 14px; font-size: 9px; }
.remote-tray .first { margin: 0 5px 0 5px; }
.remote-tray > .close-up { margin-right: 6px; }
.remote-tray time { width: 52px; margin-right: 5px; text-align: right; line-height: 14px; font-size: 9px; }
.remote-tray time + svg { margin: 0; }

/* Presenter tag over the share */
.presenter {
  position: absolute;
  left: 7px;
  bottom: 13px;
  width: 193px;
  height: 36px;
  display: flex;
  align-items: center;
  padding-left: 9px;
  border-radius: 5px;
  background: #00000088;
  color: #fff;
  font-size: 17px;
}
.presenter button { width: 17px; margin-left: 10px; }
.presenter button + button { margin-left: 17px; }
.presenter svg { width: 18px; height: 18px; }
.presenter .dim { color: #9a9a9a; }

/* Taskbar */
.taskbar {
  flex: none;
  height: 72px;
  display: flex;
  align-items: center;
  padding: 0 30px 2px 0;
  background: #eee;
  border-top: 2px solid #bdbdbd;
  color: #1b1b1b;
}
.weather { position: relative; width: 222px; margin-right: 26px; height: 60px; padding-left: 29px; justify-content: flex-start; }
.weather svg { width: 36px; height: 40px; }
.badge {
  position: absolute;
  top: 5px;
  right: 4px;
  width: 24px;
  height: 24px;
  border-radius: 12px;
  background: #c42b1c;
  color: #fff;
  font-size: 16px;
  line-height: 24px;
  text-align: center;
}
.weather .badge { left: 46px; top: 4px; }
.app { position: relative; width: 60px; height: 60px; margin: 0 3px; }
.app svg { width: 36px; height: 36px; }
.app.run::after { width: 9px; height: 6px; left: 26px; bottom: 1px; border-radius: 3px; background: #868686; }
.app.alert { border-radius: 6px; background: #e9aeaa; box-shadow: inset -9px 0 #e9aeaa, inset -11px 0 #f6e2e1; }
.app.alert::after { left: 14px; width: 33px; background: #c42b1c; }
.m365 { position: absolute; left: 22px; bottom: 12px; padding: 0 2px; border-radius: 2px; background: #000; color: #fff; font-size: 9px; line-height: 14px; font-weight: 700; }
.search {
  width: 328px;
  height: 48px;
  display: flex;
  align-items: center;
  gap: 15px;
  margin: 0 4px 0 6px;
  padding-left: 15px;
  border: 2px solid #dedede;
  border-radius: 24px;
  background: #fafafa;
  font-size: 19px;
}
.search svg { width: 23px; height: 23px; }
.search input::placeholder { color: #606060; opacity: 1; }
.tray { margin-left: auto; display: flex; align-items: center; font-size: 18px; line-height: 24px; }
.tray-up { width: 20px; }
.tray-up svg { width: 17px; height: 17px; }
.onedrive { width: 25px; height: 25px; margin: 0 12px 0 25px; }
.mic { width: 48px; height: 60px; border-radius: 6px; background: #0067c0; color: #fff; }
.mic svg { width: 18px; height: 24px; }
.tray .lang { width: 66px; text-align: center; }
.status { display: flex; gap: 12px; margin-left: 12px; }
.status svg { width: 24px; height: 24px; }
.tray time { width: 107px; text-align: right; white-space: nowrap; font-size: 17px; }
```
